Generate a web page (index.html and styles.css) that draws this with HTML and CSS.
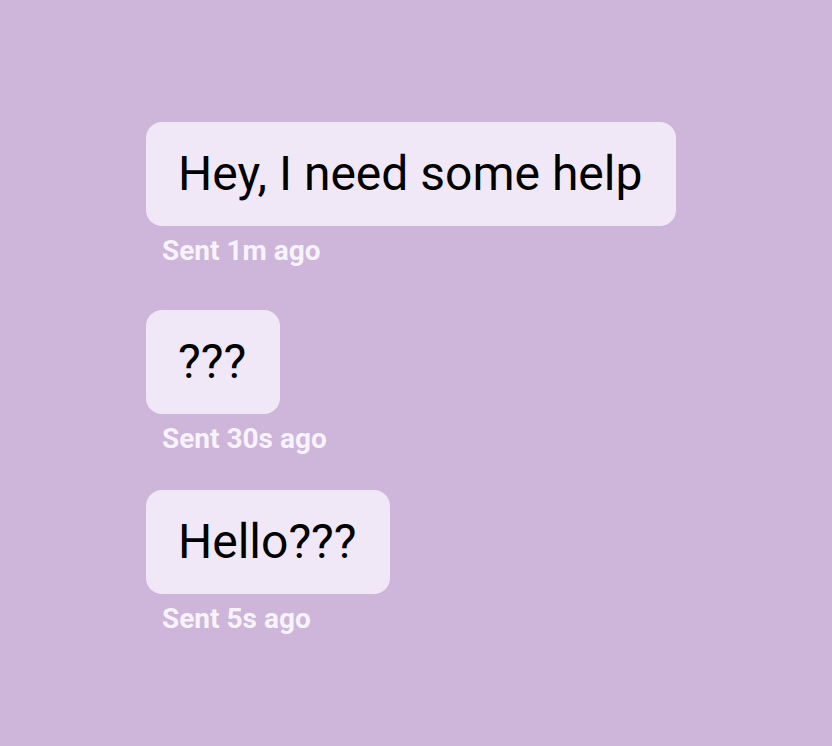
FILE: index.html
```html
<!DOCTYPE html>
<html>
<head>
<meta charset="utf-8">
<link rel="stylesheet" href="styles.css">
</head>
<body>
<div class="thread">
  <div class="msg msg-first">
    <div class="bubble">Hey, I need some help</div>
    <div class="meta">Sent 1m ago</div>
  </div>
  <div class="msg">
    <div class="bubble">???</div>
    <div class="meta">Sent 30s ago</div>
  </div>
  <div class="msg">
    <div class="bubble">Hello???</div>
    <div class="meta">Sent 5s ago</div>
  </div>
</div>
</body>
</html>
```
FILE: styles.css
```css
html, body {
  margin: 0;
  padding: 0;
  height: 100%;
}
body {
  background: #ceb5da;
  font-family: Roboto, "Liberation Sans", sans-serif;
}
.thread {
  display: flex;
  flex-direction: column;
  align-items: flex-start;
  padding: 122px 0 0 146px;
}
.msg {
  display: flex;
  flex-direction: column;
  align-items: flex-start;
  margin-bottom: 35px;
}
.msg-first {
  margin-bottom: 43px;
}
.bubble {
  background: #f1e8f7;
  color: #000;
  font-size: 48px;
  line-height: 56px;
  padding: 24px 34px 24px 32px;
  border-radius: 16px;
}
.meta {
  margin: 9px 0 0 16px;
  color: #f8f3fb;
  font-size: 28px;
  line-height: 32px;
  font-weight: 700;
}
```
